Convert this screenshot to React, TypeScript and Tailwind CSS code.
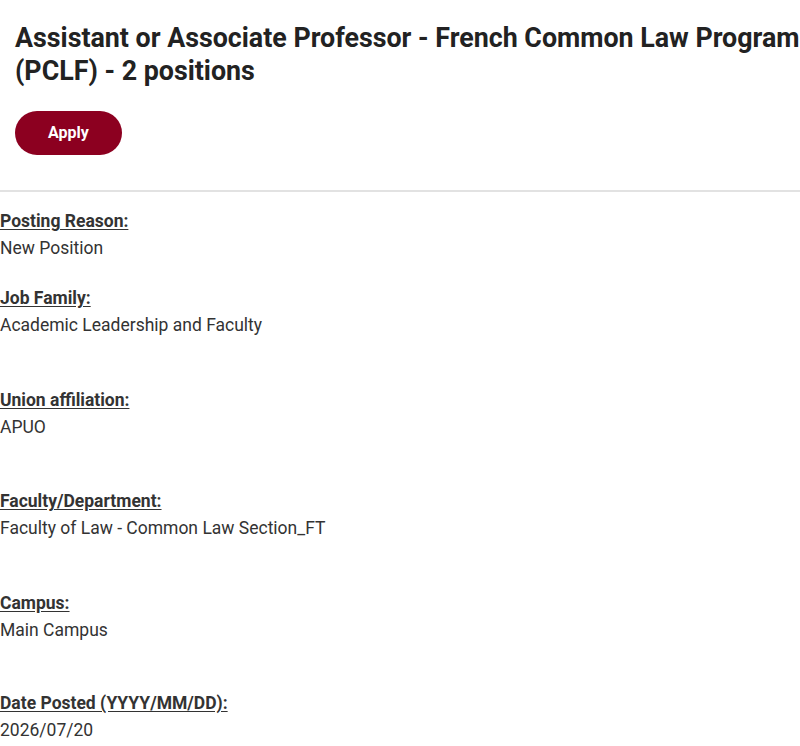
const fields = [
  { label: "Posting Reason:", value: "New Position", gap: "" },
  { label: "Job Family:", value: "Academic Leadership and Faculty", gap: "mt-[23px]" },
  { label: "Union affiliation:", value: "APUO", gap: "mt-[48px]" },
  { label: "Faculty/Department:", value: "Faculty of Law - Common Law Section_FT", gap: "mt-[47px]" },
  { label: "Campus:", value: "Main Campus", gap: "mt-[48px]" },
  { label: "Date Posted (YYYY/MM/DD):", value: "2026/07/20", gap: "mt-[46px]" },
]

export default function App() {
  return (
    <div className="min-h-[746px] overflow-hidden bg-white font-['Roboto',sans-serif] text-[#222]">
      <div className="pl-[15px] pt-[22px]">
        <h1 className="mr-[-10px] text-[26.8px] font-bold leading-[33px] text-[#222]">
          Assistant or Associate Professor - French Common Law Program (PCLF) - 2 positions
        </h1>
        <button className="mt-[23px] h-[44px] w-[107px] rounded-full bg-[#8c0020] text-[16px] font-bold text-white">
          Apply
        </button>
      </div>

      <hr className="mt-[35px] border-t-2 border-[#e2e2e2]" />

      <div className="pt-[16px] text-[17.5px] leading-[27px] text-[#333]">
        {fields.map((f) => (
          <div key={f.label} className={f.gap}>
            <div className="font-bold underline underline-offset-2">{f.label}</div>
            <div>{f.value}</div>
          </div>
        ))}
      </div>
    </div>
  )
}
